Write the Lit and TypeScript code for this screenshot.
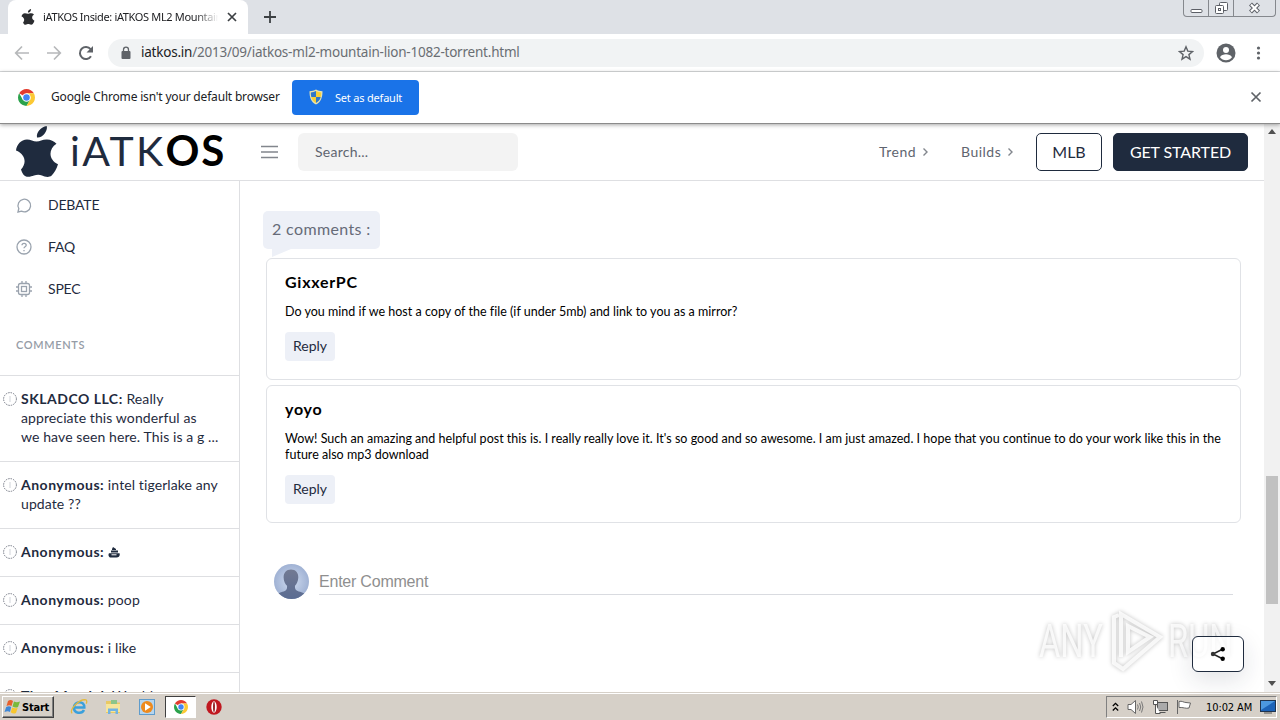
import { LitElement, html, svg, css } from 'lit';
import { customElement, property } from 'lit/decorators.js';

const apple = svg`
  <path d="M30.700.100c.9 2.800-.6 5.600-2.200 7.700-1.900 2.400-4.700 4.100-7.500 3.700-.6-2.700.7-5.300 2.300-7.200C25 2.200 28 .700 30.700.100z"/>
  <path d="M20.500 15.500c3.500 0 6-2.200 10.500-2 3.700.1 7 1.600 9.500 4.300-8 5-8.500 15.500 1.500 20.500-1.500 4.700-3.700 8.700-6.300 11.200-3.300 2.700-7.200.9-9.700 0-2.700-.9-5.300-.8-8 .1-3 1-6 2-9 .4-2.200-1.600-3.300-4-4-6.500 4.200-4.500 4.500-9.500 2-13.500C5.200 27 2.500 25.300 0 24.500c.7-6 5-10.700 11-11 3.500 0 6.500 2 9.500 2z"/>
`;

const chromeLogo = html`
  <svg class="chrome" viewBox="2 2 44 44">
    <circle cx="24" cy="24" r="22" fill="#fff"/>
    <path d="M24 24 4.950 13A22 22 0 0 1 43.050 13H24z" fill="#e33b2e"/>
    <path d="M4.950 13A22 22 0 0 0 24 46l9.500-16.500L24 24l-9.500 5.500z" fill="#2ba24c"/>
    <path d="M43.050 13A22 22 0 0 1 24 46l9.500-16.500L33 18l-9-5z" fill="#fcc934"/>
    <circle cx="24" cy="24" r="11" fill="#fff"/>
    <circle cx="24" cy="24" r="8.500" fill="#4285f4"/>
  </svg>
`;

@customElement('browser-chrome')
export class BrowserChrome extends LitElement {
  static styles = css`
    :host {
      display: block;
      font-family: 'Noto Sans', sans-serif;
      color: #202124;
      position: relative;
      z-index: 1;
    }

    svg {
      display: block;
      flex: none;
    }

    .strip {
      display: flex;
      height: 34px;
      background: #dee1e6;
      padding-left: 8px;
    }

    .tab {
      display: flex;
      align-items: center;
      box-sizing: border-box;
      width: 240px;
      height: 34px;
      padding: 0 10px 0 13px;
      background: #fff;
      border-radius: 8px 8px 0 0;
    }

    .tab-title {
      flex: 1;
      margin: 0 4px 2px 8px;
      font-size: 11px;
      letter-spacing: -0.35px;
      white-space: nowrap;
      overflow: hidden;
      -webkit-mask-image: linear-gradient(to right, #000 85%, transparent 98%);
    }

    .plus {
      margin: 11px 0 0 16px;
    }

    .window-buttons {
      display: flex;
      box-sizing: border-box;
      width: 93px;
      height: 17px;
      margin: 0 4px 0 auto;
      border: 1px solid #85888d;
      border-top: 0;
      border-radius: 0 0 4px 4px;
    }

    .window-buttons span {
      display: flex;
      align-items: center;
      justify-content: center;
      width: 24px;
      border-right: 1px solid #85888d;
    }

    .window-buttons span:last-child {
      flex: 1;
      border: 0;
    }

    .toolbar {
      display: flex;
      align-items: center;
      height: 37px;
      padding: 0 15px 0 14px;
      background: #fff;
      border-bottom: 1px solid #d9dbdd;
    }

    .toolbar .nav {
      margin-right: 16px;
    }

    .omnibox {
      display: flex;
      align-items: center;
      box-sizing: border-box;
      flex: 1;
      height: 28px;
      margin: 0 12px 0 -2px;
      padding: 0 10px 0 12px;
      border-radius: 14px;
      background: #f1f3f4;
    }

    .url {
      flex: 1;
      margin: 0 0 2px 9px;
      font-size: 13.5px;
      letter-spacing: -0.22px;
      color: #6a6e73;
    }

    .url b {
      font-weight: 400;
      color: #202124;
    }

    .dots {
      margin-left: 15px;
    }

    .infobar {
      display: flex;
      align-items: center;
      box-sizing: border-box;
      height: 52px;
      padding: 0 18px;
      background: #fff;
      border-bottom: 1px solid #8b8b8b;
      box-shadow: 0 1px 4px rgba(0, 0, 0, 0.35);
      font-size: 12px;
    }

    .infobar .chrome {
      width: 17px;
      height: 17px;
    }

    .message {
      width: 241px;
      margin: 0 0 2px 16px;
      letter-spacing: -0.18px;
      white-space: nowrap;
    }

    .default-button {
      display: flex;
      align-items: center;
      box-sizing: border-box;
      width: 127px;
      height: 35px;
      padding: 0 0 1px 17px;
      gap: 12px;
      border-radius: 4px;
      background: #1a73e8;
      color: #fff;
      font-size: 11px;
      letter-spacing: -0.2px;
    }

    .dismiss {
      margin: 0 0 2px auto;
    }
  `;

  render() {
    return html`
      <div class="strip">
        <div class="tab">
          <svg width="14" height="16" viewBox="0 0 42 52" fill="#2b2d30">${apple}</svg>
          <div class="tab-title">iATKOS Inside: iATKOS ML2 Mountain</div>
          <svg width="12" height="12" viewBox="0 0 12 12" stroke="#3c4043" stroke-width="1.700"><path d="M2 2l8 8M10 2l-8 8"/></svg>
        </div>
        <svg class="plus" width="12" height="12" viewBox="0 0 12 12" stroke="#3c4043" stroke-width="1.800"><path d="M6 0v12M0 6h12"/></svg>
        <div class="window-buttons">
          <span><svg width="13" height="14" viewBox="0 0 13 14"><rect x="1" y="8.500" width="11" height="3" rx="1" fill="#fff" stroke="#5c5f66"/></svg></span>
          <span><svg width="13" height="14" viewBox="0 0 13 14" fill="#fff" stroke="#5c5f66"><rect x="4.500" y="1.500" width="8" height="8" rx="1"/><rect x=".5" y="4.500" width="8" height="8" rx="1"/><rect x="3.500" y="7.500" width="2" height="2"/></svg></span>
          <span><svg width="13" height="14" viewBox="0 0 13 14"><path d="M2.500 3l8 8M10.500 3l-8 8" stroke="#5c5f66" stroke-width="4.200"/><path d="M3 3.500l7 7M10 3.500l-7 7" stroke="#fff" stroke-width="2.200"/></svg></span>
        </div>
      </div>
      <div class="toolbar">
        <svg class="nav" width="16" height="16" viewBox="0 0 16 16" fill="none" stroke="#b6b8ba" stroke-width="1.700"><path d="M15 8H2M8 1.500L1.700 8 8 14.500"/></svg>
        <svg class="nav" width="16" height="16" viewBox="0 0 16 16" fill="none" stroke="#b6b8ba" stroke-width="1.700"><path d="M1 8h13M8 1.500L14.300 8 8 14.500"/></svg>
        <svg class="nav" width="16" height="16" viewBox="0 0 16 16"><path d="M13 11.200A6 6 0 1 1 12.600 4.200" fill="none" stroke="#5f6368" stroke-width="2"/><path d="M15 1v6.500H8.500z" fill="#5f6368"/></svg>
        <div class="omnibox">
          <svg width="12" height="14" viewBox="0 0 12 14"><rect x="1.500" y="5" width="9" height="8" rx="1" fill="#5f6368"/><path d="M3.500 6V3.700a2.500 2.500 0 0 1 5 0V6" fill="none" stroke="#5f6368" stroke-width="1.300"/></svg>
          <div class="url"><b>iatkos.in</b>/2013/09/iatkos-ml2-mountain-lion-1082-torrent.html</div>
          <svg width="16" height="16" viewBox="0 0 16 16" fill="none" stroke="#5f6368" stroke-width="1.400"><path d="M8 1.800l1.800 4.300 4.700.4-3.600 3.100 1.100 4.600L8 11.700l-4 2.500 1.100-4.600-3.600-3.100 4.700-.4z"/></svg>
        </div>
        <svg width="20" height="20" viewBox="0 0 20 20"><circle cx="10" cy="10" r="9.500" fill="#5f6368"/><circle cx="10" cy="7" r="3" fill="#fff"/><path d="M4 14.300c1-2.200 3.700-3 6-3s5 .8 6 3c-1.400 2-3.600 3-6 3s-4.600-1-6-3z" fill="#fff"/></svg>
        <svg class="dots" width="14" height="16" viewBox="0 0 14 16" fill="#5f6368"><circle cx="7.500" cy="3" r="1.600"/><circle cx="7.500" cy="8" r="1.600"/><circle cx="7.500" cy="13" r="1.600"/></svg>
      </div>
      <div class="infobar">
        ${chromeLogo}
        <div class="message">Google Chrome isn't your default browser</div>
        <div class="default-button">
          <svg width="14" height="16" viewBox="0 0 14 16"><path d="M7 .5c2 1.300 4 1.700 6.500 1.700 0 6-1.300 10.500-6.500 13.300C1.800 12.700.5 8.200.5 2.200 3 2.200 5 1.800 7 .5z" fill="#e6e2b0"/><path d="M7 2v6H2.300C1.900 6.500 1.800 5 1.800 3.400 3.700 3.300 5.400 2.900 7 2zM7 8h4.700c-.7 2.700-2.200 4.600-4.700 6z" fill="#2f77c8"/><path d="M7 2v6h4.700c.4-1.500.5-3 .5-4.600C10.300 3.300 8.600 2.900 7 2zM7 8H2.300c.7 2.700 2.200 4.600 4.700 6z" fill="#f7cf35"/></svg>
          Set as default
        </div>
        <svg class="dismiss" width="12" height="12" viewBox="0 0 12 12" stroke="#5f6368" stroke-width="1.700"><path d="M1.500 1.500l9 9M10.500 1.500l-9 9"/></svg>
      </div>
    `;
  }
}

@customElement('site-header')
export class SiteHeader extends LitElement {
  static styles = css`
    :host {
      display: flex;
      align-items: center;
      box-sizing: border-box;
      height: 57px;
      padding: 0 16px;
      border-bottom: 1px solid #dedfe2;
      font-family: Lato, sans-serif;
      color: #1f2b3e;
    }

    svg {
      display: block;
      flex: none;
    }

    .logo {
      width: 188px;
      margin: 0 0 3px 12px;
      font-size: 41px;
      line-height: 53px;
      letter-spacing: 2.4px;
      white-space: nowrap;
    }

    .logo b {
      color: #000;
      font-size: 42px;
      letter-spacing: 1.8px;
    }

    .search {
      box-sizing: border-box;
      width: 220px;
      height: 38px;
      margin-left: 20px;
      padding-left: 17px;
      border-radius: 6px;
      background: #f3f3f3;
      color: #5f6570;
      font-size: 14px;
      line-height: 38px;
      letter-spacing: 0.25px;
    }

    .menus {
      display: flex;
      margin: 0 -7px 0 auto;
    }

    .menu {
      display: flex;
      align-items: center;
      width: 82px;
      gap: 5px;
      margin-bottom: 1px;
      font-size: 14px;
      letter-spacing: 0.5px;
      color: #5f6570;
    }

    .button {
      box-sizing: border-box;
      width: 66px;
      height: 38px;
      border: 1px solid #1f2b3e;
      border-radius: 5px;
      font-size: 16px;
      line-height: 35px;
      text-align: center;
    }

    .primary {
      width: 135px;
      margin-left: 11px;
      background: #1f2b3e;
      color: #fff;
      letter-spacing: -0.1px;
    }
  `;

  render() {
    return html`
      <svg width="42" height="52" viewBox="0 0 42 52" fill="#1f2b3e">${apple}</svg>
      <div class="logo">iATK<b>OS</b></div>
      <svg width="20" height="14" viewBox="0 0 20 14" stroke="#82868d" stroke-width="1.400"><path d="M3 1.500h17M3 7h17M3 12.500h17"/></svg>
      <div class="search">Search...</div>
      <div class="menus">
        ${['Trend', 'Builds'].map(
          (label) => html`<div class="menu">${label}<svg width="8" height="10" viewBox="0 0 8 10" fill="none" stroke="#82868d" stroke-width="1.400"><path d="M2.500 1.500L6 5 2.500 8.500"/></svg></div>`
        )}
      </div>
      <div class="button">MLB</div>
      <div class="button primary">GET STARTED</div>
    `;
  }
}

const sideLinks = [
  {
    label: 'DEBATE',
    icon: svg`<path d="M3 16l.8-3.500A6.300 6.300 0 1 1 6.500 15.100z"/>`,
  },
  {
    label: 'FAQ',
    icon: svg`<circle cx="9" cy="9" r="7"/><path d="M7 7.300C7 6 8 5.300 9.100 5.300S11.200 6 11.200 7.300c0 1.400-2.200 1.500-2.200 2.900M9 12v1.300"/>`,
  },
  {
    label: 'SPEC',
    icon: svg`<rect x="3.500" y="3.500" width="11" height="11" rx="2"/><rect x="6.500" y="6.500" width="5" height="5"/><path d="M7 1v2.500M11 1v2.500M7 14.500V17M11 14.500V17M1 7h2.500M1 11h2.500M14.500 7H17M14.500 11H17"/>`,
  },
];

const recent = [
  { name: 'SKLADCO LLC', lines: ['Really', 'appreciate this wonderful as', 'we have seen here. This is a g ...'] },
  { name: 'Anonymous', lines: ['intel tigerlake any', 'update ??'] },
  { name: 'Anonymous', lines: ['💩'] },
  { name: 'Anonymous', lines: ['poop'] },
  { name: 'Anonymous', lines: ['i like'] },
  { name: 'TheoMandel', lines: ['Would'] },
];

@customElement('side-bar')
export class SideBar extends LitElement {
  static styles = css`
    :host {
      display: block;
      box-sizing: border-box;
      width: 240px;
      padding-top: 2px;
      border-right: 1px solid #dedfe2;
      overflow: hidden;
      font-family: Lato, sans-serif;
      color: #1f2b3e;
    }

    svg {
      display: block;
      flex: none;
    }

    .link {
      display: flex;
      align-items: center;
      height: 42px;
      padding-left: 15px;
      gap: 15px;
      font-size: 14px;
      letter-spacing: -0.2px;
    }

    .link svg {
      margin-top: 1px;
    }

    .heading {
      height: 66px;
      padding: 0 16px;
      border-bottom: 1px solid #dedfe2;
      font-size: 11px;
      font-weight: 600;
      line-height: 71px;
      letter-spacing: 0.65px;
      color: #959ca6;
    }

    .entry {
      display: flex;
      padding: 13px 0 15px 3px;
      gap: 4px;
      border-bottom: 1px solid #dedfe2;
      font-size: 14px;
      line-height: 19px;
      letter-spacing: 0.1px;
      white-space: nowrap;
    }

    .entry b {
      letter-spacing: 0.5px;
    }

    .entry > svg {
      margin-top: 3px;
    }

    .pile {
      display: inline-block;
      vertical-align: -1px;
    }
  `;

  render() {
    return html`
      ${sideLinks.map(
        ({ label, icon }) => html`
          <div class="link">
            <svg width="18" height="18" viewBox="0 0 18 18" fill="none" stroke="#9aa3ae" stroke-width="1.300">${icon}</svg>
            ${label}
          </div>
        `
      )}
      <div class="heading">COMMENTS</div>
      ${recent.map(
        ({ name, lines }) => html`
          <div class="entry">
            <svg width="14" height="14" viewBox="0 0 14 14" fill="none" stroke="#767b86"><circle cx="7" cy="7" r="6.400" stroke-dasharray="1.500 1"/><path d="M7 4v6" stroke="#d0d3d9"/></svg>
            <div>
              <b>${name}:</b>
              ${lines.map((line, i) => html`${i ? html`<br />` : ''}${line === '💩' ? this._pile() : line}`)}
            </div>
          </div>
        `
      )}
    `;
  }

  private _pile() {
    return html`<svg class="pile" width="12" height="11" viewBox="0 0 12 11" fill="#1f2b3e"><path d="M5 0l3 2v1H4V2zM3 3.500h7v2H3zM1 6.200h10.500c.8 2-.5 4.300-3 4.300H3C.8 10.500-.2 8 1 6.200z"/><path d="M3.500 7.800h5" stroke="#fff"/></svg>`;
  }
}

@customElement('comment-card')
export class CommentCard extends LitElement {
  static styles = css`
    :host {
      display: block;
      box-sizing: border-box;
      padding: 13px 18px 18px;
      border: 1px solid #e0e2e6;
      border-radius: 6px;
      color: #000;
    }

    .name {
      font-size: 16px;
      font-weight: 700;
      line-height: 20px;
      letter-spacing: 0.75px;
    }

    .text {
      margin: 12px 0;
      font-size: 12.5px;
      line-height: 16px;
      letter-spacing: 0.015px;
      white-space: pre;
    }

    .reply {
      width: 50px;
      height: 29px;
      border-radius: 4px;
      background: #edf0f7;
      color: #1f2b3e;
      font-size: 14px;
      line-height: 27px;
      text-align: center;
    }
  `;

  @property({ type: String }) name = '';
  @property({ type: String }) text = '';

  render() {
    return html`
      <div class="name">${this.name}</div>
      <div class="text">${this.text}</div>
      <div class="reply">Reply</div>
    `;
  }
}

@customElement('comment-section')
export class CommentSection extends LitElement {
  static styles = css`
    :host {
      display: block;
      flex: 1;
      padding: 30px 23px 0;
      font-family: Lato, sans-serif;
    }

    .count {
      box-sizing: border-box;
      width: 117px;
      height: 38px;
      padding-left: 9px;
      border-radius: 5px;
      background: #edf0f7;
      color: #666b78;
      font-size: 16px;
      line-height: 36px;
      letter-spacing: 0.37px;
      white-space: nowrap;
    }

    .tail {
      width: 19px;
      height: 8px;
      margin: 0 0 1px 9px;
      background: #edf0f7;
      clip-path: polygon(0 0, 100% 0, 0 100%);
    }

    .cards {
      display: grid;
      gap: 5px;
      margin: 0 0 41px 3px;
    }

    .form {
      display: flex;
      gap: 10px;
      padding: 0 8px 0 11px;
    }

    .avatar {
      display: block;
      flex: none;
    }

    .field {
      flex: 1;
      height: 30px;
      border-bottom: 1px solid #d9dbe0;
      color: #8f8f8f;
      font: 16px/35px 'Liberation Sans', sans-serif;
      letter-spacing: -0.22px;
    }
  `;

  render() {
    return html`
      <div class="count">2 comments :</div>
      <div class="tail"></div>
      <div class="cards">
        <comment-card name="GixxerPC" text="Do you mind if we host a copy of the file (if under 5mb) and link to you as a mirror?"></comment-card>
        <comment-card
          name="yoyo"
          text=${'Wow! Such an amazing and helpful post this is. I really really love it. It\'s so good and so awesome. I am just amazed. I hope that you continue to do your work like this in the\nfuture also mp3 download'}
        ></comment-card>
      </div>
      <div class="form">
        <svg class="avatar" width="35" height="35" viewBox="0 0 35 35">
          <defs>
            <radialGradient id="sky"><stop offset="0" stop-color="#d0dcf0"/><stop offset="1" stop-color="#a0b2d4"/></radialGradient>
            <linearGradient id="body" x2="0" y2="1"><stop offset="0" stop-color="#727a92"/><stop offset="1" stop-color="#5b6c92"/></linearGradient>
            <clipPath id="round"><circle cx="17.500" cy="17.500" r="17.500"/></clipPath>
          </defs>
          <g clip-path="url(#round)">
            <rect width="35" height="35" fill="url(#sky)"/>
            <path d="M17 5.500c4.700 0 7.500 3.500 7.300 8-.1 3.500-1.500 6.500-3.300 8.200-.4 3.800 1.500 5.300 5 6 3 .7 5 2 6 3.800V35H2v-3.500c1-1.800 3.500-3.100 6.500-3.800 3.500-.8 5-2.500 4.500-6-2-1.700-3.300-4.700-3.400-8.200-.1-4.500 2.700-8 7.400-8z" fill="url(#body)"/>
          </g>
        </svg>
        <div class="field">Enter Comment</div>
      </div>
    `;
  }
}

@customElement('task-bar')
export class TaskBar extends LitElement {
  static styles = css`
    :host {
      display: flex;
      align-items: center;
      box-sizing: border-box;
      height: 28px;
      padding: 1px 3px 0 2px;
      background: #d6d0c8;
      border-top: 1px solid #d6d0c8;
      box-shadow: inset 0 1px #fff;
      font-family: 'DejaVu Sans Condensed', 'DejaVu Sans', sans-serif;
      font-size: 11px;
      color: #000;
    }

    svg {
      display: block;
      flex: none;
    }

    .start {
      display: flex;
      align-items: center;
      box-sizing: border-box;
      width: 52px;
      height: 22px;
      padding-left: 1px;
      gap: 1px;
      border: 1px solid;
      border-color: #fff #404040 #404040 #fff;
      box-shadow: inset -1px -1px #808080;
      font-weight: 700;
      letter-spacing: -0.2px;
    }

    .apps {
      display: flex;
      align-items: center;
      margin-left: 8px;
    }

    .app {
      display: flex;
      align-items: center;
      justify-content: center;
      box-sizing: border-box;
      width: 34px;
      height: 22px;
    }

    .active {
      width: 31px;
      margin: 0 1px;
      background: #fff;
      border: 1px solid;
      border-color: #404040 #fff #fff #404040;
    }

    .chrome {
      width: 14px;
      height: 14px;
    }

    .tray {
      display: flex;
      align-items: center;
      box-sizing: border-box;
      width: 171px;
      height: 22px;
      margin-left: auto;
      padding: 0 0 0 5px;
      border: 1px solid;
      border-color: #808080 #fff #fff #808080;
    }

    .tray svg {
      margin-right: 8px;
    }

    .tray .desktop {
      margin: 0;
    }

    .clock {
      flex: 1;
      margin-left: 6px;
      letter-spacing: -0.1px;
      white-space: nowrap;
    }
  `;

  render() {
    return html`
      <div class="start">
        <svg width="17" height="16" viewBox="0 0 17 16"><path d="M4 2c2-1.500 3.500-1 5 0L7.500 7C6 6 4.500 6 2.500 7z" fill="#e8602c"/><path d="M10 2.500c2 1 3.500 1 6 0L14 8c-2 1-3.500.5-5.500-.5z" fill="#7ab93c"/><path d="M2.200 8c2-1 3.500-1 5 0L6 13c-1.500-1-3-1-5.500 0z" fill="#3f87d6"/><path d="M8.200 8.500c2 1 3.500 1 5.500.2L12 14c-2 1-3.500.5-5.300-.7z" fill="#f8c62d"/></svg>
        Start
      </div>
      <div class="apps">
        <div class="app">
          <svg width="18" height="18" viewBox="0 0 17 17" fill="none"><path d="M3.500 9h10c.3-7-9.500-6.500-9.800 0-.2 5.700 7.500 6.500 9.500 2.300" stroke="#3aa0dc" stroke-width="2.400"/><path d="M2 14.500C-1 11 9 .5 15 1.800c1.300.5.800 2.700.3 3.500" stroke="#e4b93c" stroke-width="1.200"/></svg>
        </div>
        <div class="app">
          <svg width="16" height="16" viewBox="0 0 16 16"><path d="M1 2h5l1 1.500h8V14H1z" fill="#e9c964"/><path d="M6 1h6v4H6z" fill="#8cc58a"/><path d="M1 5h14v8H1z" fill="#f7e59b"/><path d="M3 15V9.500h10V15h-2.500v-3h-5v3z" fill="#72b3e2"/></svg>
        </div>
        <div class="app">
          <svg width="16" height="16" viewBox="0 0 16 16"><rect x=".5" y=".5" width="15" height="15" fill="#b6d5ee" stroke="#5f9ccc"/><circle cx="8" cy="8" r="6" fill="#ee8a1d"/><path d="M6 4.300L11.800 8 6 11.700z" fill="#fff"/></svg>
        </div>
        <div class="app active">${chromeLogo}</div>
        <div class="app">
          <svg width="16" height="16" viewBox="0 0 16 16"><circle cx="8" cy="8" r="7.700" fill="#c01820"/><ellipse cx="8" cy="8" rx="2.700" ry="5.800" fill="#fff"/><ellipse cx="8" cy="8" rx=".9" ry="5.200" fill="#8c1015"/></svg>
        </div>
      </div>
      <div class="tray">
        <svg width="7" height="10" viewBox="0 0 7 10" fill="none" stroke="#000" stroke-width="1.300"><path d="M.8 4L3.500 1.300 6.200 4M.8 8.500l2.700-2.700 2.700 2.700"/></svg>
        <svg width="17" height="16" viewBox="0 0 17 16" fill="none" stroke="#777"><path d="M1 5.500h3L8.500 1.500v13L4 10.500H1z" fill="#fff" stroke="#666"/><path d="M10.500 5.500q1.500 2.500 0 5M12.500 4q2.500 4 0 8M14.500 2.500q3 5.500 0 11"/></svg>
        <svg width="16" height="16" viewBox="0 0 16 16" fill="#fff" stroke="#555"><rect x="5.500" y="3.500" width="10" height="8" fill="#aaa"/><path d="M1.500 1.500h4v4h-4zM3.500 5.500v9h5M7.500 13.500h6" fill="#fff"/></svg>
        <svg width="16" height="16" viewBox="0 0 16 16" fill="#fff" stroke="#666"><path d="M1.500 1v14"/><path d="M3 2.500c3-1 4.500 1 7 1l4.500.5-1.500 5c-3 1-6-1-10-.5z"/></svg>
        <div class="clock">10:02 AM</div>
        <svg class="desktop" width="16" height="14" viewBox="0 0 16 14"><rect x=".5" y=".5" width="15" height="11" fill="#1d63b8" stroke="#20344f"/><path d="M1 1h14L1 10z" fill="#4c98e0"/><path d="M4 13h8" stroke="#555"/></svg>
      </div>
    `;
  }
}

@customElement('app-root')
export class AppRoot extends LitElement {
  static styles = css`
    :host {
      display: flex;
      flex-direction: column;
      position: relative;
      width: 1280px;
      height: 720px;
      overflow: hidden;
      background: #fff;
    }

    .viewport {
      display: flex;
      height: 568px;
      overflow: hidden;
    }

    .page {
      display: flex;
      flex-direction: column;
      width: 1264px;
      height: 568px;
    }

    .columns {
      display: flex;
      flex: 1;
      min-height: 0;
    }

    .scrollbar {
      display: flex;
      flex-direction: column;
      align-items: center;
      box-sizing: border-box;
      width: 16px;
      padding: 5px 0 6px;
      background: #f1f1f1;
    }

    .thumb {
      width: 12px;
      height: 128px;
      margin: 342px 0 auto;
      background: #c1c1c1;
    }

    .arrow {
      border: 4px solid transparent;
      border-top: 0;
      border-bottom: 5px solid #505050;
    }

    .arrow.down {
      transform: rotate(180deg);
    }

    .share {
      position: absolute;
      left: 1192px;
      top: 636px;
      display: flex;
      align-items: center;
      justify-content: center;
      box-sizing: border-box;
      width: 52px;
      height: 36px;
      border: 1px solid #1f2b3e;
      border-radius: 6px;
      background: rgba(255, 255, 255, 0.75);
      box-shadow: 0 8px 24px rgba(30, 40, 60, 0.13);
    }

    .watermark {
      position: absolute;
      left: 1039px;
      top: 608px;
      display: flex;
      align-items: center;
      width: 200px;
      height: 66px;
      color: rgba(255, 255, 255, 0.8);
      font: 46px/66px Roboto, sans-serif;
      filter: drop-shadow(0 0 2px rgba(0, 0, 0, 0.3));
    }

    .word {
      width: 69px;
      transform: scaleX(0.71);
      transform-origin: left;
      white-space: nowrap;
    }

    .watermark svg {
      flex: none;
      margin-right: 4px;
    }
  `;

  render() {
    return html`
      <browser-chrome></browser-chrome>
      <div class="viewport">
        <div class="page">
          <site-header></site-header>
          <div class="columns">
            <side-bar></side-bar>
            <comment-section></comment-section>
          </div>
        </div>
        <div class="scrollbar">
          <div class="arrow"></div>
          <div class="thumb"></div>
          <div class="arrow down"></div>
        </div>
      </div>
      <task-bar></task-bar>
      <div class="watermark">
        <div class="word">ANY</div>
        <svg width="56" height="64" viewBox="0 0 56 64" fill="none" stroke="rgba(255,255,255,.8)" stroke-width="4"><path d="M13 48V5l39 23L15 60l-9-6V8l5-2M20 43V17l22 11z"/></svg>
        <div class="word">RUN</div>
      </div>
      <div class="share">
        <svg width="16" height="16" viewBox="0 0 16 16"><path d="M13 3L3 8l10 5" fill="none" stroke="#222" stroke-width="1.500"/><circle cx="12.700" cy="3.200" r="2.200"/><circle cx="3" cy="8" r="2.200" fill="#333"/><circle cx="12.700" cy="12.800" r="2.200"/></svg>
      </div>
    `;
  }
}
